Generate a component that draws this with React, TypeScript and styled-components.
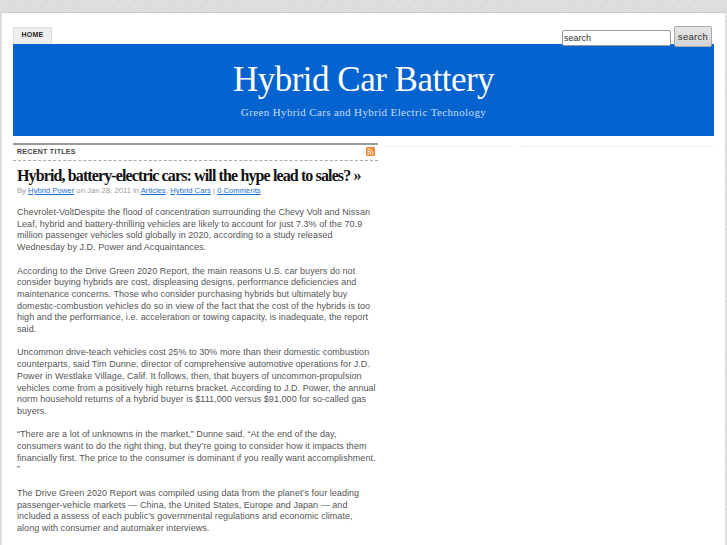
import React from "react";
import styled, { createGlobalStyle } from "styled-components";

const Global = createGlobalStyle`
  html, body { margin: 0; padding: 0; height: 545px; overflow: hidden; }
  body {
    background-color: #dcdcdc;
    background-image: repeating-linear-gradient(135deg, #d8d8d8 0 1px, #e0e0e0 1px 3px);
    font-family: "Liberation Sans", Arial, sans-serif;
    color: #555;
  }
  a { color: #1c6fd0; text-decoration: underline; }
`;

const Page = styled.div`
  margin: 12px 2px 0 2px;
  padding: 0 11px;
  background: #fff;
  border-top: 1px solid #ccc;
  height: 600px;
  box-sizing: border-box;
`;

const TopBar = styled.div`
  display: flex;
  justify-content: space-between;
  align-items: flex-end;
  height: 31px;
`;

const Tab = styled.div`
  width: 39px;
  height: 17px;
  box-sizing: border-box;
  padding-bottom: 3px;
  background: #eee;
  border: 1px solid #ddd;
  border-bottom: none;
  font-size: 7px;
  font-weight: bold;
  letter-spacing: 0.2px;
  color: #222;
  display: flex;
  align-items: center;
  justify-content: center;
`;

const SearchForm = styled.form`
  display: flex;
  align-items: flex-start;
  gap: 3px;
  margin: 0 2px -3px 0;
`;

const SearchInput = styled.input`
  width: 109px;
  height: 16px;
  margin-top: 4px;
  box-sizing: border-box;
  border: 1px solid #999;
  border-radius: 2px;
  padding: 0 1px;
  font: 9px "Liberation Sans", Arial, sans-serif;
  color: #333;
  background: #fff;
`;

const SearchButton = styled.button`
  width: 38px;
  height: 21px;
  box-sizing: border-box;
  border: 1px solid #aaa;
  border-radius: 2px;
  background: linear-gradient(#e6e6e6, #d4d4d4);
  font: 9.5px "Liberation Sans", Arial, sans-serif;
  letter-spacing: 0.3px;
  color: #333;
  padding: 0;
`;

const Banner = styled.header`
  background: #0563cf;
  height: 92px;
  color: #fff;
  text-align: center;
  font-family: "Liberation Serif", "Times New Roman", serif;
`;

const SiteTitle = styled.h1`
  margin: 0;
  padding-top: 15px;
  font-size: 35px;
  line-height: 41px;
  font-weight: normal;
  letter-spacing: -0.5px;
`;

const Tagline = styled.p`
  margin: 5px 0 0;
  font-size: 11px;
  line-height: 14px;
  letter-spacing: 0.37px;
  color: #c6dbf7;
`;

const Columns = styled.div`
  display: flex;
  margin-top: 7px;
`;

const Main = styled.main`
  width: 365px;
`;

const SectionHead = styled.div`
  border-top: 2px solid #999;
  border-bottom: 1px dashed #aaa;
  height: 15px;
  padding: 0 3px 2px 4px;
  box-sizing: content-box;
  height: 13px;
  display: flex;
  justify-content: space-between;
  align-items: center;
  font-size: 7px;
  font-weight: bold;
  letter-spacing: 0.3px;
  color: #444;
`;

const Sidebar = styled.aside`
  flex: 1;
  display: flex;
  gap: 7px;
  margin: 3px 0 0 8px;
`;

const SidebarRule = styled.div<{ $width?: number }>`
  flex: ${(p) => (p.$width ? `0 0 ${p.$width}px` : "1")};
  height: 1px;
  border-top: 1px dotted #e2e2e2;
`;

const Post = styled.article`
  padding: 0 4px;
`;

const PostTitle = styled.h2`
  margin: 5px 0 0;
  font-family: "Liberation Serif", "Times New Roman", serif;
  font-size: 16px;
  line-height: 19px;
  font-weight: bold;
  letter-spacing: -0.88px;
  color: #111;
  white-space: nowrap;
`;

const Meta = styled.div`
  margin-top: 1px;
  font-size: 7.65px;
  line-height: 10px;
  letter-spacing: 0.02px;
  color: #999;
`;

const Para = styled.p`
  margin: 0 0 11.7px;
  font-size: 9px;
  line-height: 11.7px;
  letter-spacing: 0.05px;
  color: #555;
  white-space: nowrap;
`;

const Body = styled.div`
  margin-top: 11px;
`;

const paragraphs = [
  ["Chevrolet-VoltDespite the flood of concentration surrounding the Chevy Volt and Nissan", "Leaf, hybrid and battery-thrilling vehicles are likely to account for just 7.3% of the 70.9", "million passenger vehicles sold globally in 2020, according to a study released", "Wednesday by J.D. Power and Acquaintances."],
  ["According to the Drive Green 2020 Report, the main reasons U.S. car buyers do not", "consider buying hybrids are cost, displeasing designs, performance deficiencies and", "maintenance concerns. Those who consider purchasing hybrids but ultimately buy", "domestic-combustion vehicles do so in view of the fact that the cost of the hybrids is too", "high and the performance, i.e. acceleration or towing capacity, is inadequate, the report", "said."],
  ["Uncommon drive-teach vehicles cost 25% to 30% more than their domestic combustion", "counterparts, said Tim Dunne, director of comprehensive automotive operations for J.D.", "Power in Westlake Village, Calif. It follows, then, that buyers of uncommon-propulsion", "vehicles come from a positively high returns bracket. According to J.D. Power, the annual", "norm household returns of a hybrid buyer is $111,000 versus $91,000 for so-called gas", "buyers."],
  ["“There are a lot of unknowns in the market,” Dunne said. “At the end of the day,", "consumers want to do the right thing, but they’re going to consider how it impacts them", "financially first. The price to the consumer is dominant if you really want accomplishment.", "”"],
  ["The Drive Green 2020 Report was compiled using data from the planet’s four leading", "passenger-vehicle markets — China, the United States, Europe and Japan — and", "included a assess of each public’s governmental regulations and economic climate,", "along with consumer and automaker interviews."],
];

const RssIcon = () => (
  <svg width="9" height="9" viewBox="0 0 9 9" aria-hidden="true">
    <rect width="9" height="9" rx="1" fill="#f08a35" />
    <circle cx="2.2" cy="6.8" r="0.9" fill="#fff" />
    <path d="M1.5 4.2a3.3 3.3 0 0 1 3.3 3.3M1.5 2a5.5 5.5 0 0 1 5.5 5.5" fill="none" stroke="#fff" strokeWidth="1" />
  </svg>
);

export default function App() {
  return (
    <>
      <Global />
      <Page>
        <TopBar>
          <Tab>HOME</Tab>
          <SearchForm onSubmit={(e) => e.preventDefault()}>
            <SearchInput defaultValue="search" />
            <SearchButton type="button">search</SearchButton>
          </SearchForm>
        </TopBar>
        <Banner>
          <SiteTitle>Hybrid Car Battery</SiteTitle>
          <Tagline>Green Hybrid Cars and Hybrid Electric Technology</Tagline>
        </Banner>
        <Columns>
          <Main>
            <SectionHead>
              <span>RECENT TITLES</span>
              <RssIcon />
            </SectionHead>
            <Post>
              <PostTitle>Hybrid, battery-electric cars: will the hype lead to sales? »</PostTitle>
              <Meta>
                By <a href="#">Hybrid Power</a> on Jan 28, 2011 in <a href="#">Articles</a>, <a href="#">Hybrid Cars</a> | <a href="#">0 Comments</a>
              </Meta>
              <Body>
                {paragraphs.map((lines, i) => (
                  <Para key={i}>
                    {lines.map((l, j) => (
                      <React.Fragment key={j}>
                        {l}
                        {j < lines.length - 1 && <br />}
                      </React.Fragment>
                    ))}
                  </Para>
                ))}
              </Body>
            </Post>
          </Main>
          <Sidebar>
            <SidebarRule $width={127} />
            <SidebarRule />
          </Sidebar>
        </Columns>
      </Page>
    </>
  );
}
